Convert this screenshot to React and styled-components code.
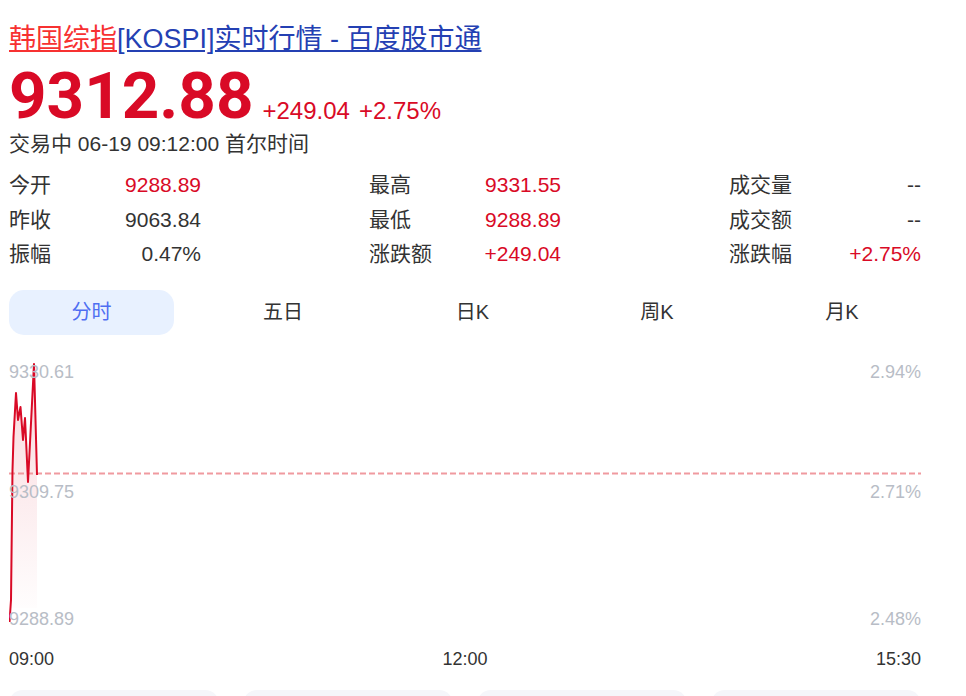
import styled, { createGlobalStyle } from 'styled-components';

const FONT = '"Liberation Sans", "Noto Sans CJK SC", sans-serif';
const RED = '#d90a26';

const STATS = [
  [
    { label: '今开', value: '9288.89', up: true },
    { label: '昨收', value: '9063.84' },
    { label: '振幅', value: '0.47%' },
  ],
  [
    { label: '最高', value: '9331.55', up: true },
    { label: '最低', value: '9288.89', up: true },
    { label: '涨跌额', value: '+249.04', up: true },
  ],
  [
    { label: '成交量', value: '--' },
    { label: '成交额', value: '--' },
    { label: '涨跌幅', value: '+2.75%', up: true },
  ],
];

const TABS = ['分时', '五日', '日K', '周K', '月K'];

// chart coords: x from page left minus 9, y from the top of the chart box
const LINE = [
  [0.5, 272], [2, 250], [3.5, 120], [4.5, 87], [7, 43], [9, 70], [11.5, 57], [14, 90],
  [16, 68], [19, 132], [25, 14], [28, 125],
];

const GlobalStyle = createGlobalStyle`
  html, body {
    margin: 0;
    padding: 0;
    background: #fff;
    overflow: hidden;
  }
  body {
    font-family: ${FONT};
    color: #333;
  }
`;

const Page = styled.div`
  width: 912px;
  height: 696px;
  padding: 0 0 0 9px;
  overflow: hidden;
`;

const Title = styled.h1`
  margin: 0;
  padding-top: 21px;
  font-size: 27px;
  line-height: 36px;
  font-weight: 400;
  white-space: nowrap;
`;

const TitleLink = styled.a`
  color: ${({ $hot }) => ($hot ? '#f73131' : '#2440b3')};
  text-decoration: underline;
`;

const PriceRow = styled.div`
  display: flex;
  align-items: flex-end;
  margin-top: 6px;
  height: 65px;
  color: ${RED};
`;

const Price = styled.span`
  font-family: Roboto, ${FONT};
  font-size: 65.5px;
  line-height: 65px;
  font-weight: 700;
  margin-right: 9px;
`;

const Change = styled.span`
  font-size: 24px;
  line-height: 30px;
  margin: 0 9px 2px 0;
`;

const Meta = styled.div`
  font-size: 21px;
  line-height: 30px;
  margin-top: 1px;
`;

const StatGrid = styled.div`
  display: grid;
  grid-template-columns: repeat(3, 192px);
  column-gap: 168px;
  margin-top: 9px;
`;

const StatColumn = styled.div`
  display: flex;
  flex-direction: column;
`;

const StatRow = styled.div`
  display: flex;
  justify-content: space-between;
  font-size: 21px;
  height: 34.7px;
  line-height: 34.7px;
`;

const StatValue = styled.span`
  color: ${({ $up }) => ($up ? RED : '#333')};
`;

const Tabs = styled.div`
  display: grid;
  grid-template-columns: 165px 218px 161px 208px 162px;
  margin-top: 18px;
`;

const Tab = styled.div`
  height: 45px;
  line-height: 45px;
  text-align: center;
  font-size: 20px;
  border-radius: 15px;
  color: ${({ $active }) => ($active ? '#4e6ef2' : '#333')};
  background: ${({ $active }) => ($active ? '#e8f1ff' : 'transparent')};
`;

const Chart = styled.div`
  position: relative;
  height: 280px;
  margin-top: 15px;
`;

const ChartSvg = styled.svg`
  display: block;
  width: 912px;
  height: 280px;
`;

const AxisLabel = styled.span`
  position: absolute;
  top: ${({ $top }) => $top}px;
  ${({ $right }) => ($right ? 'right: 0;' : 'left: 0;')}
  font-size: 18px;
  line-height: 22px;
  color: #b8bdc6;
`;

const TimeAxis = styled.div`
  display: flex;
  justify-content: space-between;
  font-size: 18px;
  line-height: 22px;
  margin-top: 18px;
`;

const Cards = styled.div`
  display: grid;
  grid-template-columns: repeat(4, 210px);
  column-gap: 24px;
  margin-top: 20px;
`;

const Card = styled.div`
  height: 60px;
  border-radius: 14px;
  background: #f5f6fa;
`;

export default function App() {
  const points = LINE.map((p) => p.join(',')).join(' ');
  const area = `0.5,258 ${points} 28,258`;

  return (
    <>
      <GlobalStyle />
      <Page>
        <Title>
          <TitleLink $hot>韩国综指</TitleLink>
          <TitleLink>[KOSPI]实时行情 - 百度股市通</TitleLink>
        </Title>
        <PriceRow>
          <Price>9312.88</Price>
          <Change>+249.04</Change>
          <Change>+2.75%</Change>
        </PriceRow>
        <Meta>交易中 06-19 09:12:00 首尔时间</Meta>
        <StatGrid>
          {STATS.map((col, i) => (
            <StatColumn key={i}>
              {col.map((row) => (
                <StatRow key={row.label}>
                  <span>{row.label}</span>
                  <StatValue $up={row.up}>{row.value}</StatValue>
                </StatRow>
              ))}
            </StatColumn>
          ))}
        </StatGrid>
        <Tabs>
          {TABS.map((t, i) => (
            <Tab key={t} $active={i === 0}>{t}</Tab>
          ))}
        </Tabs>
        <Chart>
          <ChartSvg viewBox="0 0 912 280">
            <defs>
              <linearGradient id="areaFill" x1="0" y1="0" x2="0" y2="1">
                <stop offset="0" stopColor="#d90a26" stopOpacity="0.16" />
                <stop offset="1" stopColor="#d90a26" stopOpacity="0" />
              </linearGradient>
            </defs>
            <polygon points={area} fill="url(#areaFill)" />
            <line x1="0" y1="123.5" x2="912" y2="123.5" stroke="#f09a9f" strokeWidth="2" strokeDasharray="6 3" />
            <polyline points={points} fill="none" stroke={RED} strokeWidth="2" strokeLinejoin="round" />
          </ChartSvg>
          <AxisLabel $top={11}>9330.61</AxisLabel>
          <AxisLabel $top={131}>9309.75</AxisLabel>
          <AxisLabel $top={258}>9288.89</AxisLabel>
          <AxisLabel $top={11} $right>2.94%</AxisLabel>
          <AxisLabel $top={131} $right>2.71%</AxisLabel>
          <AxisLabel $top={258} $right>2.48%</AxisLabel>
        </Chart>
        <TimeAxis>
          <span>09:00</span>
          <span>12:00</span>
          <span>15:30</span>
        </TimeAxis>
        <Cards>
          <Card />
          <Card />
          <Card />
          <Card />
        </Cards>
      </Page>
    </>
  );
}
